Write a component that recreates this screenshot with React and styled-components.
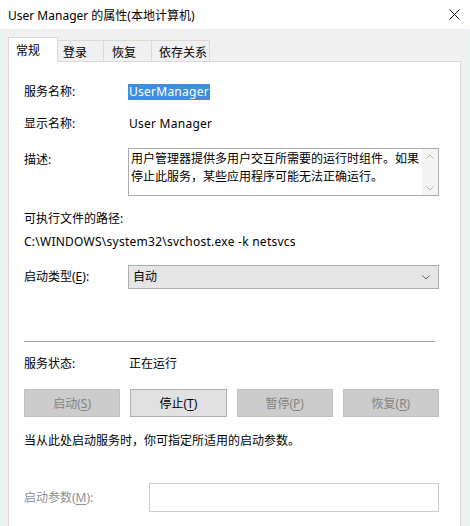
import React from 'react';
import styled, { createGlobalStyle } from 'styled-components';

const Global = createGlobalStyle`
  html, body { margin: 0; padding: 0; }
  body {
    background: #e4f4f5;
    font-family: "Noto Sans", "Noto Sans CJK SC", sans-serif;
    font-size: 12px;
    color: #000;
  }
`;

const Window = styled.div`
  width: 470px;
  height: 526px;
  display: flex;
  flex-direction: column;
  overflow: hidden;
`;

const TitleBar = styled.div`
  height: 29px;
  flex: none;
  background: #fff;
  display: flex;
  align-items: center;
  justify-content: space-between;
  padding: 0 10px 0 8px;
  font-size: 12px;
  color: #000;
`;

const CloseIcon = () => (
  <svg width="11" height="11" viewBox="0 0 11 11" style={{ display: 'block' }}>
    <path d="M0.5 0.5 L10.5 10.5 M10.5 0.5 L0.5 10.5" stroke="#111" strokeWidth="1" fill="none" />
  </svg>
);

const Body = styled.div`
  flex: 1;
  display: flex;
  flex-direction: column;
  background: #f0f0f0;
  border-left: 2px solid #e4f4f5;
  border-right: 3px solid #e4f4f5;
  padding: 8px 6px 0 6px;
  min-height: 0;
`;

const TabStrip = styled.div`
  display: flex;
  align-items: flex-end;
  height: 25px;
  position: relative;
  z-index: 1;
  margin-bottom: -1px;
`;

const Tab = styled.div`
  box-sizing: border-box;
  width: ${p => p.$w}px;
  height: ${p => (p.$active ? 25 : 22)}px;
  display: flex;
  align-items: center;
  padding-left: ${p => p.$pl}px;
  padding-top: 1px;
  background: ${p => (p.$active ? '#fff' : '#f0f0f0')};
  border: 1px solid #d9d9d9;
  border-left: ${p => (p.$first ? '1px solid #d9d9d9' : 'none')};
  border-bottom-color: ${p => (p.$active ? '#fff' : '#d9d9d9')};
  font-size: 12px;
`;

const Panel = styled.div`
  flex: 1;
  background: #fff;
  border: 1px solid #d9d9d9;
  border-bottom: none;
  padding: 22px 21px 0 15px;
  display: flex;
  flex-direction: column;
`;

const Row = styled.div`
  display: flex;
  align-items: ${p => (p.$top ? 'flex-start' : 'center')};
  margin-top: ${p => p.$mt || 0}px;
  line-height: 16px;
  min-height: 16px;
`;

const Label = styled.div`
  width: ${p => p.$w || 104}px;
  flex: none;
  color: ${p => (p.$muted ? '#8f8f8f' : '#000')};
  margin-top: ${p => p.$mt || 0}px;
`;

const Value = styled.div`
  padding-left: 1px;
`;

/* Latin runs are set a touch looser than the CJK text around them */
const Latin = styled.span`
  letter-spacing: 0.25px;
`;

const Selected = styled.span`
  display: inline-block;
  background: #3d8fdd;
  color: #fff;
  padding: 0 1px;
  line-height: 16px;
  letter-spacing: 0.25px;
`;

const TextBox = styled.div`
  box-sizing: border-box;
  width: 311px;
  height: 48px;
  border: 1px solid #a9acb3;
  display: flex;
`;

const TextBody = styled.div`
  flex: 1;
  padding: 1px 2px 0 2px;
  line-height: 18px;
`;

const ScrollBar = styled.div`
  width: 16px;
  flex: none;
  background: #f3f3f3;
  display: flex;
  flex-direction: column;
  justify-content: space-between;
  align-items: center;
  padding: 5px 0 4px;
`;

const Arrow = ({ up }) => (
  <svg width="8" height="5" viewBox="0 0 8 5" style={{ display: 'block' }}>
    <path d={up ? 'M0.5 4.5 L4 1 L7.5 4.5' : 'M0.5 0.5 L4 4 L7.5 0.5'} stroke="#b4b4b4" strokeWidth="1" fill="none" />
  </svg>
);

const Line = styled.div`
  margin-top: ${p => p.$mt || 0}px;
  line-height: 16px;
  color: #000;
`;

const Select = styled.div`
  box-sizing: border-box;
  width: 311px;
  height: 24px;
  background: #e5e5e5;
  border: 1px solid #adadad;
  display: flex;
  align-items: center;
  justify-content: space-between;
  padding: 0 8px 0 4px;
`;

const Chevron = () => (
  <svg width="8" height="5" viewBox="0 0 8 5" style={{ display: 'block' }}>
    <path d="M0.5 0.5 L4 4 L7.5 0.5" stroke="#606060" strokeWidth="1" fill="none" />
  </svg>
);

const Separator = styled.div`
  margin-top: ${p => p.$mt || 0}px;
  width: 411px;
  height: 1px;
  background: #a0a0a0;
`;

const ButtonRow = styled.div`
  margin-top: ${p => p.$mt || 0}px;
  display: grid;
  grid-template-columns: repeat(4, 1fr);
  column-gap: 10px;
`;

const Button = styled.div`
  box-sizing: border-box;
  height: 28px;
  display: flex;
  align-items: center;
  justify-content: center;
  background: ${p => (p.$disabled ? '#cccccc' : '#e1e1e1')};
  border: 1px solid ${p => (p.$disabled ? '#bfbfbf' : '#adadad')};
  color: ${p => (p.$disabled ? '#838383' : '#000')};
`;

const Key = styled.span`
  text-decoration: underline;
  text-underline-offset: 2px;
`;

const Input = styled.div`
  box-sizing: border-box;
  width: 290px;
  height: 29px;
  background: #fff;
  border: 1px solid #cccccc;
`;

const tabs = [
  { name: '常规', w: 50, pl: 7, active: true },
  { name: '登录', w: 46, pl: 5 },
  { name: '恢复', w: 48, pl: 8 },
  { name: '依存关系', w: 58, pl: 7 },
];

const buttons = [
  { text: '启动', key: 'S', disabled: true },
  { text: '停止', key: 'T', disabled: false },
  { text: '暂停', key: 'P', disabled: true },
  { text: '恢复', key: 'R', disabled: true },
];

export default function App() {
  return (
    <Window>
      <Global />
      <TitleBar>
        <span>User Manager 的属性(本地计算机)</span>
        <CloseIcon />
      </TitleBar>
      <Body>
        <TabStrip>
          {tabs.map((t, i) => (
            <Tab key={t.name} $w={t.w} $pl={t.pl} $active={t.active} $first={i === 0}>
              {t.name}
            </Tab>
          ))}
        </TabStrip>
        <Panel>
          <Row>
            <Label>服务名称:</Label>
            <Selected>UserManager</Selected>
          </Row>
          <Row $mt={16}>
            <Label>显示名称:</Label>
            <Value>
              <Latin>User Manager</Latin>
            </Value>
          </Row>
          <Row $mt={16} $top>
            <Label $mt={4}>描述:</Label>
            <TextBox>
              <TextBody>
                用户管理器提供多用户交互所需要的运行时组件。如果停止此服务，某些应用程序可能无法正确运行。
              </TextBody>
              <ScrollBar>
                <Arrow up />
                <Arrow />
              </ScrollBar>
            </TextBox>
          </Row>
          <Line $mt={15}>可执行文件的路径:</Line>
          <Line $mt={7}>
            <Latin>C:\WINDOWS\system32\svchost.exe -k netsvcs</Latin>
          </Line>
          <Row $mt={15}>
            <Label>
              启动类型(<Key>E</Key>):
            </Label>
            <Select>
              <span>自动</span>
              <Chevron />
            </Select>
          </Row>
          <Separator $mt={52} />
          <Row $mt={14}>
            <Label>服务状态:</Label>
            <Value>正在运行</Value>
          </Row>
          <ButtonRow $mt={17}>
            {buttons.map(b => (
              <Button key={b.key} $disabled={b.disabled}>
                {b.text}(<Key>{b.key}</Key>)
              </Button>
            ))}
          </ButtonRow>
          <Line $mt={16}>当从此处启动服务时，你可指定所适用的启动参数。</Line>
          <Row $mt={34}>
            <Label $w={125} $muted>
              启动参数(<Key>M</Key>):
            </Label>
            <Input />
          </Row>
        </Panel>
      </Body>
    </Window>
  );
}
